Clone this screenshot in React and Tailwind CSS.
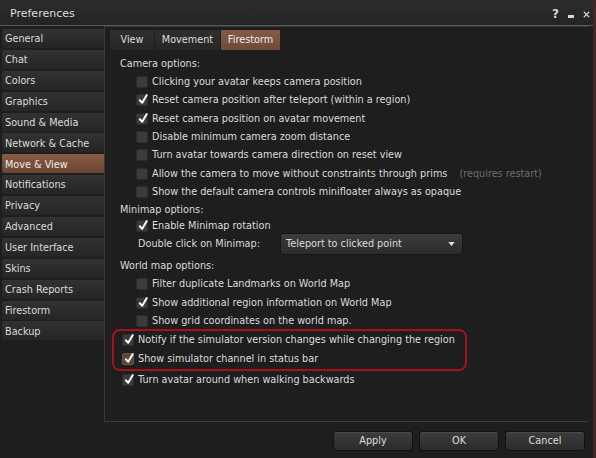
import React from "react";

const sideTabs = [
  "General",
  "Chat",
  "Colors",
  "Graphics",
  "Sound & Media",
  "Network & Cache",
  "Move & View",
  "Notifications",
  "Privacy",
  "Advanced",
  "User Interface",
  "Skins",
  "Crash Reports",
  "Firestorm",
  "Backup",
];

function Check({ checked, hot }) {
  return (
    <div
      className={`relative w-[12px] h-[12px] shrink-0 rounded-[2px] border ${
        hot ? "bg-[#5e4637] border-[#6e5446]" : "bg-[#3b3b3b] border-[#2c2c2c]"
      }`}
    >
      {checked && (
        <svg
          viewBox="0 0 12 12"
          className="absolute left-[1px] top-[-2px] w-[11px] h-[13px] overflow-visible"
        >
          <path
            d="M2 6.8 L4.6 9.6 L9.6 1.2"
            fill="none"
            stroke="#ffffff"
            strokeWidth="2.1"
            strokeLinecap="round"
            strokeLinejoin="round"
          />
        </svg>
      )}
    </div>
  );
}

function Row({ checked, children, h = "h-[18.33px]", hot, extra }) {
  return (
    <div className={`flex items-center ${h} pl-[16px] gap-[4px]`}>
      <Check checked={checked} hot={hot} />
      <span className="whitespace-nowrap">{children}</span>
      {extra}
    </div>
  );
}

function Label({ children, h = "h-[18px]" }) {
  return <div className={`flex items-center ${h} whitespace-nowrap`}>{children}</div>;
}

function Button({ children }) {
  return (
    <div className="w-[80px] h-[20px] rounded-[3px] border border-[#111] bg-gradient-to-b from-[#3d3d3d] to-[#2b2b2b] flex items-center justify-center text-[#dedede] shadow-[inset_0_1px_0_#4a4a4a]">
      {children}
    </div>
  );
}

export default function App() {
  return (
    <div className="w-[596px] h-[458px] bg-[#1e1e1e] flex flex-col overflow-hidden font-['DejaVu_Sans',sans-serif] text-[9.7px] text-[#dcdcdc] border-r-[3px] border-[#4a2424]">
      {/* Title bar */}
      <div className="h-[26px] shrink-0 flex items-center justify-between bg-gradient-to-b from-[#2c2c2c] to-[#242424] border-b border-[#5a5a5a] pt-[3px]">
        <span className="pl-[10px] text-[11px] text-[#dedede]">Preferences</span>
        <div className="flex items-center gap-[9px] pr-[3px] text-[#d8d8d8]">
          <span className="text-[12px] font-bold leading-none">?</span>
          <span className="w-[6px] h-[3px] bg-[#d8d8d8] mt-[4px]" />
          <svg viewBox="0 0 8 8" className="w-[7px] h-[7px]">
            <path d="M1 1 L7 7 M7 1 L1 7" stroke="#d8d8d8" strokeWidth="1.6" />
          </svg>
        </div>
      </div>

      <div className="flex flex-1">
        {/* Sidebar */}
        <div className="w-[104px] shrink-0 pl-[2px] pt-[3px] flex flex-col gap-[1.9px]">
          {sideTabs.map((t) => (
            <div
              key={t}
              className={`h-[19px] flex items-center pl-[3px] pt-[2px] rounded-l-[2px] whitespace-nowrap ${
                t === "Move & View"
                  ? "bg-gradient-to-b from-[#8a5c45] to-[#6a4433] text-[#eeeeee]"
                  : "bg-gradient-to-b from-[#323232] to-[#252525] text-[#dcdcdc]"
              }`}
            >
              {t}
            </div>
          ))}
        </div>

        {/* Right */}
        <div className="flex-1 flex flex-col">
          <div className="h-[396px] w-[484px] border-l border-t border-b border-[#3a3a3a] flex flex-col">
            {/* inner tabs */}
            <div className="flex pl-[5px] pt-[3px] gap-[1px]">
              <div className="h-[20px] w-[44px] flex items-center justify-center bg-gradient-to-b from-[#2f2f2f] to-[#262626]">
                View
              </div>
              <div className="h-[20px] w-[65px] flex items-center justify-center bg-gradient-to-b from-[#2f2f2f] to-[#262626]">
                Movement
              </div>
              <div className="h-[20px] w-[59px] flex items-center justify-center bg-gradient-to-b from-[#845a46] to-[#6f4a39] text-[#eeeeee]">
                Firestorm
              </div>
            </div>

            <div className="flex flex-col pl-[15px] mt-[5px]">
              <Label>Camera options:</Label>
              <Row>Clicking your avatar keeps camera position</Row>
              <Row checked>Reset camera position after teleport (within a region)</Row>
              <Row checked>Reset camera position on avatar movement</Row>
              <Row>Disable minimum camera zoom distance</Row>
              <Row>Turn avatar towards camera direction on reset view</Row>
              <Row
                extra={
                  <span className="ml-[8px] text-[#6e6e6e] whitespace-nowrap">(requires restart)</span>
                }
              >
                Allow the camera to move without constraints through prims
              </Row>
              <Row>Show the default camera controls minifloater always as opaque</Row>

              <Label>Minimap options:</Label>
              <Row checked h="h-[14px]">
                Enable Minimap rotation
              </Row>
              <div className="flex items-center h-[22px] pl-[18px]">
                <span className="w-[142px] whitespace-nowrap">Double click on Minimap:</span>
                <div className="w-[183px] h-[22px] rounded-[3px] border border-[#151515] bg-gradient-to-b from-[#3c3c3c] to-[#2b2b2b] flex items-center justify-between pl-[5px] pr-[7px]">
                  <span>Teleport to clicked point</span>
                  <svg viewBox="0 0 8 5" className="w-[7px] h-[4px]">
                    <path d="M0 0 L8 0 L4 5 Z" fill="#e0e0e0" />
                  </svg>
                </div>
              </div>

              <Label h="h-[18px] mt-[2px]">World map options:</Label>
              <Row>Filter duplicate Landmarks on World Map</Row>
              <Row checked>Show additional region information on World Map</Row>
              <Row h="h-[18px]">Show grid coordinates on the world map.</Row>

              <div className="-ml-[8px] -mt-[1px] w-[355px] h-[42px] rounded-[8px] border-2 border-[#a5121a] flex flex-col justify-center pl-[8px]">
                <div className="flex items-center h-[19px] gap-[4px]">
                  <Check checked />
                  <span className="whitespace-nowrap">
                    Notify if the simulator version changes while changing the region
                  </span>
                </div>
                <div className="flex items-center h-[19px] gap-[4px]">
                  <Check checked hot />
                  <span className="whitespace-nowrap">Show simulator channel in status bar</span>
                </div>
              </div>
              <div className="flex items-center h-[19px] pl-[2px] gap-[4px]">
                <Check checked />
                <span className="whitespace-nowrap">Turn avatar around when walking backwards</span>
              </div>
            </div>
          </div>

          <div className="flex justify-end gap-[6px] pr-[8px] mt-[9px]">
            <Button>Apply</Button>
            <Button>OK</Button>
            <Button>Cancel</Button>
          </div>
        </div>
      </div>
    </div>
  );
}
